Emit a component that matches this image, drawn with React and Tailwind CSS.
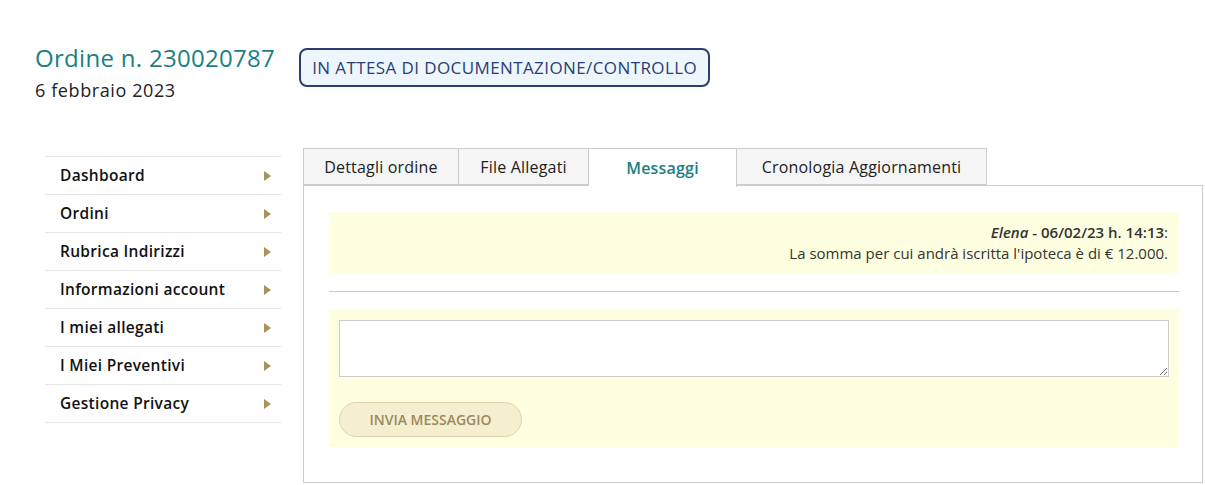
const menu = [
  "Dashboard",
  "Ordini",
  "Rubrica Indirizzi",
  "Informazioni account",
  "I miei allegati",
  "I Miei Preventivi",
  "Gestione Privacy",
];

const tabs = [
  { label: "Dettagli ordine", w: "w-[156px]" },
  { label: "File Allegati", w: "w-[130px]" },
  { label: "Messaggi", w: "w-[148px]", active: true },
  { label: "Cronologia Aggiornamenti", w: "w-[250px]" },
];

const Arrow = () => (
  <svg width="7" height="10" viewBox="0 0 7 10" className="shrink-0">
    <path d="M0 0 L7 5 L0 10 Z" fill="#a8935a" />
  </svg>
);

export default function App() {
  return (
    <div className="w-[1205px] h-[485px] overflow-hidden bg-white font-['Open_Sans',sans-serif] text-[#222]">
      {/* Header */}
      <div className="flex items-start gap-[24px] pt-[43px] pl-[35px]">
        <div>
          <h1 className="text-[24px] leading-[30px] font-medium text-[#1b7f83] tracking-[0.3px]">
            Ordine n. 230020787
          </h1>
          <p className="text-[18px] leading-[34px] tracking-[0.6px] text-[#222]">6 febbraio 2023</p>
        </div>
        <div className="mt-[5px] h-[39px] w-[411px] flex items-center justify-center border-2 border-[#2c3e70] rounded-[8px] bg-[#eef6fd] text-[#2c3e70] text-[17px] tracking-[0.4px]">
          IN ATTESA DI DOCUMENTAZIONE/CONTROLLO
        </div>
      </div>

      {/* Main */}
      <div className="flex items-start mt-[41px]">
        {/* Sidebar */}
        <ul className="ml-[45px] mt-[8px] w-[236px] border-t border-[#e5e5e5]">
          {menu.map((m) => (
            <li
              key={m}
              className="h-[38px] flex items-center justify-between pl-[15px] pr-[10px] border-b border-[#e5e5e5] text-[15.5px] font-semibold tracking-[0.3px] text-[#111]"
            >
              <span>{m}</span>
              <Arrow />
            </li>
          ))}
        </ul>

        {/* Panel */}
        <div className="ml-[22px] w-[900px]">
          <div className="flex h-[38px]">
            {tabs.map((t, i) => (
              <div
                key={t.label}
                className={
                  "flex items-center justify-center border-t border-r border-[#ccc] text-[16px] tracking-[0.2px] " +
                  t.w +
                  (i === 0 ? " border-l" : "") +
                  (t.active
                    ? " bg-white text-[#1b7f83] font-semibold h-[39px] relative z-10"
                    : " bg-[#f5f5f5] text-[#222] border-b-2")
                }
              >
                {t.label}
              </div>
            ))}
          </div>
          <div className="-mt-px border border-[#ccc] h-[298px] pt-[26px] pl-[25px] pr-[23px]">
            <div className="bg-[#fefee0] h-[62px] pt-[10px] pr-[11px] text-right text-[15px] leading-[21px] text-[#333]">
              <p>
                <span className="italic font-semibold">Elena</span>
                <span className="font-semibold"> - 06/02/23 h. 14:13</span>:
              </p>
              <p>La somma per cui andrà iscritta l'ipoteca è di € 12.000.</p>
            </div>
            <hr className="mt-[17px] mb-[17px] border-0 border-t border-[#ccc]" />
            <div className="bg-[#fefee0] h-[138px] pt-[11px] px-[10px]">
              <textarea className="block w-full h-[57px] bg-white border border-[#ccc] outline-none" />
              <button className="mt-[25px] w-[183px] h-[35px] rounded-full bg-[#f5efd0] border border-[#e0d3a8] text-[#9a8a5e] text-[14px] font-semibold uppercase">
                Invia messaggio
              </button>
            </div>
          </div>
        </div>
      </div>
    </div>
  );
}
